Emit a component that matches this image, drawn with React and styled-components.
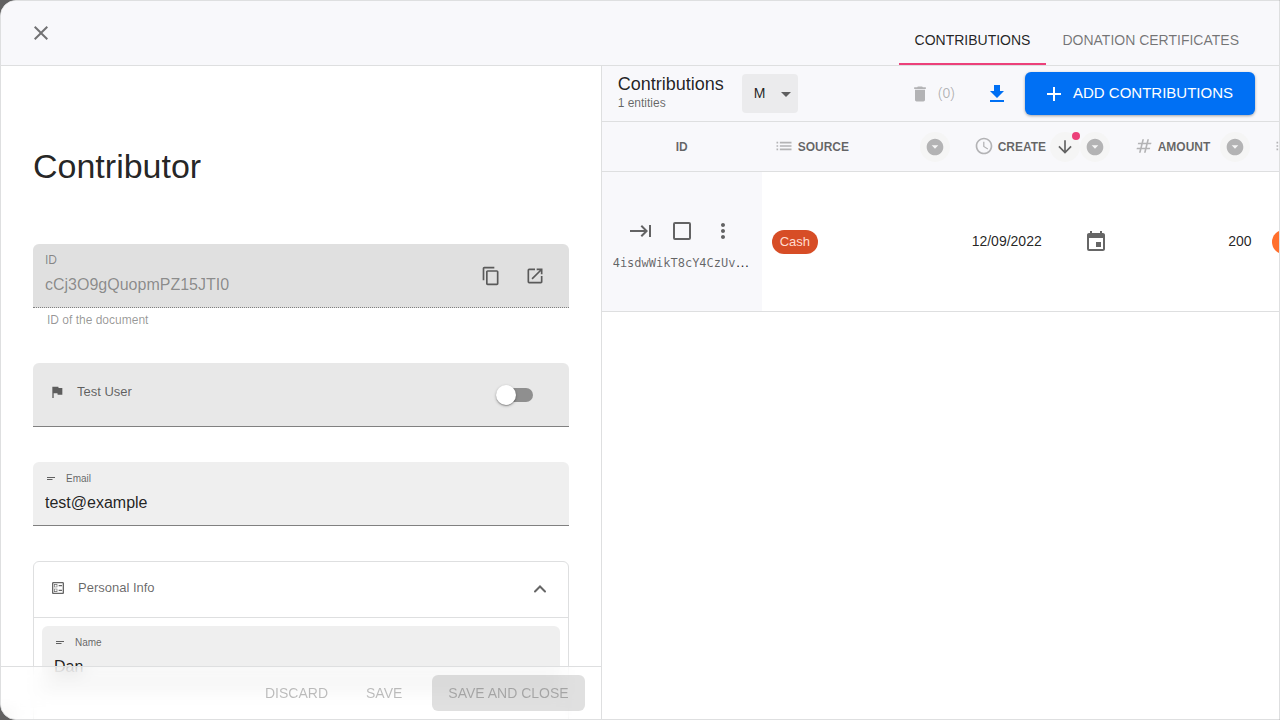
import React from "react";
import styled, { createGlobalStyle, css } from "styled-components";
import {
  MdClose, MdDelete, MdAdd, MdList, MdSchedule, MdNumbers, MdArrowDropDownCircle,
  MdArrowDownward, MdKeyboardTab, MdMoreVert, MdEvent, MdContentCopy, MdOpenInNew,
  MdFlag, MdOutlineBallot,
} from "react-icons/md";

const line = "#dedfe0";
const ink = "rgba(0, 0, 0, 0.87)";
const soft = "rgba(0, 0, 0, 0.6)";

const GlobalStyle = createGlobalStyle`
  *, *::before, *::after { box-sizing: border-box; }
  body {
    margin: 0;
    background: #616161;
    color: ${ink};
    font-family: "Liberation Sans", Arial, sans-serif;
    font-size: 14px;
    overflow: hidden;
  }
  button, input, select { font: inherit; color: inherit; margin: 0; }
  button { border: 0; padding: 0; background: none; cursor: pointer; }
  h1, h2, p { margin: 0; font-weight: 400; }
`;

const Dialog = styled.div`
  display: flex;
  flex-direction: column;
  height: 100vh;
  border: 1px solid ${line};
  border-radius: 16px 0 0 16px;
  background: #fff;
  overflow: hidden;
`;

const TopBar = styled.header`
  display: flex;
  justify-content: space-between;
  flex: none;
  height: 65px;
  padding: 0 24px;
  background: #f8f8fb;
  border-bottom: 1px solid ${line};
`;

const IconButton = styled.button`
  display: inline-flex;
  align-items: center;
  justify-content: center;
  flex: none;
  width: ${(p) => p.$size || 40}px;
  height: ${(p) => p.$size || 40}px;
  border-radius: 50%;
  color: ${(p) => p.$color || soft};
  background: ${(p) => p.$fill || "none"};
  svg { display: block; }
`;

const CloseButton = styled(IconButton)`
  align-self: center;
  width: 32px;
  color: rgba(0, 0, 0, 0.54);
`;

const Tabs = styled.nav`
  display: flex;
`;

const Tab = styled.a`
  display: flex;
  align-items: center;
  padding: 16px 16px 0;
  text-decoration: none;
  line-height: 20px;
  color: ${(p) => (p.$active ? ink : "rgba(0, 0, 0, 0.54)")};
  border-bottom: 2px solid ${(p) => (p.$active ? "#ec407a" : "transparent")};
`;

const Body = styled.div`
  display: grid;
  grid-template-columns: 47fr 53fr;
  flex: 1;
  min-height: 0;
`;

const FormPane = styled.section`
  display: grid;
  grid-template-rows: minmax(0, 1fr);
  min-width: 0;
  min-height: 0;
  border-right: 1px solid ${line};
`;

const FormScroll = styled.div`
  grid-area: 1 / 1;
  min-height: 0;
  overflow: hidden;
  padding: 80px 32px 0;
`;

const Title = styled.h1`
  font-size: 34px;
  line-height: 40px;
`;

const Fields = styled.div`
  display: flex;
  flex-direction: column;
  gap: 35px;
  margin-top: 58px;
`;

const FieldBox = styled.div`
  display: flex;
  align-items: center;
  height: 64px;
  padding: 0 12px;
  border-radius: 6px 6px 0 0;
  background: ${(p) => p.$fill || "#efefef"};
  border-bottom: 1px ${(p) => (p.$dotted ? "dotted" : "solid")} #808080;
`;

const FieldStack = styled.div`
  display: flex;
  flex-direction: column;
  flex: 1;
  gap: ${(p) => (p.$large ? 6 : 5)}px;
  min-width: 0;
  padding-bottom: ${(p) => (p.$large ? 1 : 0)}px;
`;

const FieldLabel = styled.label`
  display: flex;
  align-items: center;
  gap: 9px;
  font-size: ${(p) => (p.$large ? 12 : 10)}px;
  line-height: 14px;
  color: ${(p) => (p.$faded ? "rgba(0, 0, 0, 0.42)" : soft)};
`;

const TextInput = styled.input`
  width: 100%;
  height: 24px;
  padding: 0;
  border: 0;
  outline: 0;
  background: none;
  font-size: 16px;
  color: ${ink};
  &:disabled { color: rgba(0, 0, 0, 0.4); }
`;

const FieldActions = styled.div`
  display: flex;
  gap: 4px;
  padding-right: 2px;
`;

const Helper = styled.p`
  padding: 4px 14px 0;
  font-size: 12px;
  line-height: 16px;
  color: rgba(0, 0, 0, 0.42);
`;

const SwitchRow = styled.label`
  display: flex;
  align-items: center;
  flex: 1;
  padding: 0 24px 0 4px;
`;

const RowTitle = styled.span`
  display: flex;
  align-items: center;
  flex: 1;
  gap: 12px;
  padding-bottom: ${(p) => p.$lift}px;
  font-size: 13px;
  line-height: 16px;
  color: ${soft};
`;

const Switch = styled.input`
  appearance: none;
  display: flex;
  align-items: center;
  width: 34px;
  height: 14px;
  background: #8f8f8f;
  border-radius: 7px;
  &::before {
    content: "";
    flex: none;
    width: 20px;
    height: 20px;
    margin-left: -3px;
    border-radius: 50%;
    background: #fff;
    box-shadow: 0 1px 3px rgba(0, 0, 0, 0.3), 0 1px 1px rgba(0, 0, 0, 0.2);
  }
`;

const Group = styled.section`
  border: 1px solid ${line};
  border-radius: 6px;
`;

const GroupHeader = styled.button`
  display: flex;
  align-items: center;
  width: 100%;
  height: 56px;
  padding: 0 16px 2px;
  border-bottom: 1px solid ${line};
  text-align: left;
  color: ${soft};
`;

const GroupBody = styled.div`
  padding: 8px 8px 96px;
`;

const FormFooter = styled.footer`
  grid-area: 1 / 1;
  align-self: end;
  z-index: 1;
  display: flex;
  align-items: center;
  justify-content: flex-end;
  gap: 8px;
  height: 53px;
  padding: 0 16px;
  border-top: 1px solid ${line};
  background: rgba(255, 255, 255, 0.6);
  backdrop-filter: blur(8px);
`;

const ActionButton = styled.button`
  height: 36px;
  padding: 0 ${(p) => (p.$filled ? 16 : 15)}px;
  border-radius: 6px;
  color: rgba(0, 0, 0, 0.26);
  white-space: nowrap;
  ${(p) => p.$filled && css`
    background: rgba(0, 0, 0, 0.12);
    margin-left: 7px;
  `}
`;

const TablePane = styled.section`
  display: flex;
  flex-direction: column;
  min-width: 0;
  overflow: hidden;
`;

const Toolbar = styled.div`
  display: flex;
  align-items: center;
  justify-content: space-between;
  flex: none;
  height: 56px;
  padding: 0 24px 0 16px;
  background: #f8f8fb;
  border-bottom: 1px solid ${line};
`;

const ToolbarSide = styled.div`
  display: flex;
  align-items: center;
  gap: ${(p) => p.$gap}px;
`;

const TitleBlock = styled.div`
  padding-bottom: 2px;
`;

const TableTitle = styled.h2`
  font-size: 18px;
  line-height: 20px;
`;

const Count = styled.p`
  font-size: 12px;
  line-height: 18px;
  color: ${soft};
`;

const SelectBox = styled.div`
  display: grid;
  align-items: center;
  width: 56px;
  height: 39px;
  border-radius: 4px;
  background: #ebebed;
  select, svg { grid-area: 1 / 1; }
  svg { justify-self: end; color: ${soft}; pointer-events: none; }
`;

const SizeSelect = styled.select`
  appearance: none;
  width: 100%;
  height: 100%;
  padding: 0 12px 2px;
  border: 0;
  background: none;
`;

const ButtonText = styled.span`
  padding-bottom: 2px;
`;

const DeleteButton = styled.button`
  display: flex;
  align-items: center;
  gap: 8px;
  padding: 0 8px;
  color: rgba(0, 0, 0, 0.28);
`;

const AddButton = styled.button`
  display: flex;
  align-items: center;
  gap: 7px;
  height: 43px;
  padding: 0 22px 0 17px;
  border-radius: 6px;
  background: #0070f4;
  color: #fff;
  font-size: 15px;
  white-space: nowrap;
  box-shadow: 0 1px 3px rgba(0, 0, 0, 0.35);
`;

const Table = styled.table`
  table-layout: fixed;
  width: 840px;
  border-collapse: separate;
  border-spacing: 0;
`;

const HeadCell = styled.th`
  height: 50px;
  padding: 0 12px;
  background: #f8f8fb;
  border-bottom: 1px solid ${line};
  font-size: 12px;
  color: ${soft};
  text-align: center;
`;

const HeadContent = styled.div`
  display: flex;
  align-items: center;
`;

const HeadIcon = styled.span`
  display: flex;
  flex: none;
  padding-bottom: 2px;
  color: rgba(0, 0, 0, 0.28);
`;

const HeadLabel = styled.span`
  flex: 1;
  padding-left: 4px;
  text-align: left;
`;

const SortButton = styled(IconButton)`
  position: relative;
  &::after {
    content: "";
    position: absolute;
    top: 0;
    right: 0;
    width: 8px;
    height: 8px;
    border-radius: 50%;
    background: #ec407a;
  }
`;

const Cell = styled.td`
  height: 140px;
  padding: 0 ${(p) => (p.$frozen ? 11 : 10)}px ${(p) => p.$lift || 0}px;
  border-bottom: 1px solid ${line};
  background: ${(p) => (p.$frozen ? "#f8f8fb" : "#fff")};
  text-align: ${(p) => p.$align || "left"};
`;

const RowActions = styled.div`
  display: flex;
  align-items: center;
  justify-content: center;
  color: ${soft};
`;

const CheckWrap = styled.label`
  display: flex;
  padding: 12px;
`;

const Check = styled.input`
  appearance: none;
  width: 18px;
  height: 18px;
  border: 2px solid ${soft};
  border-radius: 2px;
`;

const RowId = styled.div`
  height: 20px;
  line-height: 20px;
  overflow: hidden;
  text-overflow: ellipsis;
  white-space: nowrap;
  font-size: 14px;
  span {
    font-family: "DejaVu Sans Mono", monospace;
    font-size: 12px;
    color: ${soft};
  }
`;

const Chip = styled.span`
  display: inline-flex;
  align-items: center;
  height: 24px;
  padding: 0 8px;
  border-radius: 12px;
  font-size: 13px;
  vertical-align: middle;
  background: ${(p) => p.$fill};
  color: ${(p) => p.$color};
`;

const DateValue = styled.div`
  display: flex;
  align-items: center;
  justify-content: space-between;
  padding-right: 4px;
  svg { color: ${soft}; }
`;

function DownloadIcon() {
  return (
    <svg width="24" height="24" viewBox="0 0 24 24" fill="currentColor" aria-hidden="true">
      <path d="M19 9h-4V3H9v6H5l7 7 7-7zM5 18v2h14v-2H5z" />
    </svg>
  );
}

function CaretIcon() {
  return (
    <svg width="24" height="24" viewBox="0 0 24 24" fill="currentColor" aria-hidden="true">
      <path d="m7 10 5 5 5-5z" />
    </svg>
  );
}

function ShortTextIcon() {
  return (
    <svg width="12" height="12" viewBox="0 0 12 12" fill="currentColor" aria-hidden="true">
      <path d="M2 4h8v1H2zM2 6h5.5v1H2z" />
    </svg>
  );
}

function ChevronUpIcon() {
  return (
    <svg width="24" height="24" viewBox="0 0 24 24" fill="none" stroke="currentColor" strokeWidth="2" strokeLinecap="round" aria-hidden="true">
      <path d="m7 14.5 5-5 5 5" />
    </svg>
  );
}

function TextField({ id, label, value }) {
  return (
    <FieldBox>
      <FieldStack>
        <FieldLabel htmlFor={id}>
          <ShortTextIcon />
          {label}
        </FieldLabel>
        <TextInput id={id} defaultValue={value} />
      </FieldStack>
    </FieldBox>
  );
}

function FilterButton({ name }) {
  return (
    <IconButton $size={30} $fill="#f5f5f5" $color="#b3b3b4" aria-label={`Filter ${name}`}>
      <MdArrowDropDownCircle size={20} />
    </IconButton>
  );
}

function Column({ icon, name, sorted }) {
  return (
    <HeadCell scope="col">
      <HeadContent>
        <HeadIcon>{icon}</HeadIcon>
        <HeadLabel>{name}</HeadLabel>
        {sorted && (
          <SortButton $size={30} $fill="#f5f5f5" aria-label={`Sort by ${name}`}>
            <MdArrowDownward size={20} />
          </SortButton>
        )}
        <FilterButton name={name} />
      </HeadContent>
    </HeadCell>
  );
}

export default function App() {
  return (
    <>
      <GlobalStyle />
      <Dialog>
        <TopBar>
          <CloseButton aria-label="Close"><MdClose size={24} /></CloseButton>
          <Tabs>
            <Tab href="#contributions" $active>CONTRIBUTIONS</Tab>
            <Tab href="#certificates">DONATION CERTIFICATES</Tab>
          </Tabs>
        </TopBar>
        <Body>
          <FormPane>
            <FormScroll>
              <Title>Contributor</Title>
              <Fields>
                <div>
                  <FieldBox $fill="#e0e0e0" $dotted>
                    <FieldStack $large>
                      <FieldLabel htmlFor="doc-id" $large $faded>ID</FieldLabel>
                      <TextInput id="doc-id" defaultValue="cCj3O9gQuopmPZ15JTI0" disabled />
                    </FieldStack>
                    <FieldActions>
                      <IconButton aria-label="Copy"><MdContentCopy size={20} /></IconButton>
                      <IconButton aria-label="Open"><MdOpenInNew size={20} /></IconButton>
                    </FieldActions>
                  </FieldBox>
                  <Helper>ID of the document</Helper>
                </div>
                <FieldBox $fill="#e8e8e8">
                  <SwitchRow>
                    <RowTitle $lift={6}><MdFlag size={16} />Test User</RowTitle>
                    <Switch type="checkbox" role="switch" />
                  </SwitchRow>
                </FieldBox>
                <TextField id="email" label="Email" value="test@example" />
                <Group>
                  <GroupHeader aria-expanded="true">
                    <RowTitle $lift={2}><MdOutlineBallot size={16} />Personal Info</RowTitle>
                    <ChevronUpIcon />
                  </GroupHeader>
                  <GroupBody>
                    <TextField id="name" label="Name" value="Dan" />
                  </GroupBody>
                </Group>
              </Fields>
            </FormScroll>
            <FormFooter>
              <ActionButton disabled>DISCARD</ActionButton>
              <ActionButton disabled>SAVE</ActionButton>
              <ActionButton disabled $filled>SAVE AND CLOSE</ActionButton>
            </FormFooter>
          </FormPane>
          <TablePane>
            <Toolbar>
              <ToolbarSide $gap={18}>
                <TitleBlock>
                  <TableTitle>Contributions</TableTitle>
                  <Count>1 entities</Count>
                </TitleBlock>
                <SelectBox>
                  <SizeSelect aria-label="Row size" defaultValue="m">
                    <option value="m">M</option>
                  </SizeSelect>
                  <CaretIcon />
                </SelectBox>
              </ToolbarSide>
              <ToolbarSide $gap={14}>
                <DeleteButton disabled><MdDelete size={20} /><ButtonText>(0)</ButtonText></DeleteButton>
                <ToolbarSide $gap={8}>
                  <IconButton $color="#0070f4" aria-label="Download"><DownloadIcon /></IconButton>
                  <AddButton><MdAdd size={24} /><ButtonText>ADD CONTRIBUTIONS</ButtonText></AddButton>
                </ToolbarSide>
              </ToolbarSide>
            </Toolbar>
            <Table>
              <colgroup>
                <col style={{ width: 160 }} />
                <col style={{ width: 200 }} />
                <col style={{ width: 160 }} />
                <col style={{ width: 140 }} />
                <col style={{ width: 180 }} />
              </colgroup>
              <thead>
                <tr>
                  <HeadCell scope="col">ID</HeadCell>
                  <Column icon={<MdList size={20} />} name="SOURCE" />
                  <Column icon={<MdSchedule size={20} />} name="CREATE" sorted />
                  <Column icon={<MdNumbers size={20} />} name="AMOUNT" />
                  <Column icon={<MdList size={20} />} name="" />
                </tr>
              </thead>
              <tbody>
                <tr>
                  <Cell $frozen $lift={2}>
                    <RowActions>
                      <IconButton aria-label="Open entry"><MdKeyboardTab size={24} /></IconButton>
                      <CheckWrap><Check type="checkbox" aria-label="Select entry" /></CheckWrap>
                      <IconButton aria-label="More"><MdMoreVert size={24} /></IconButton>
                    </RowActions>
                    <RowId><span>4isdwWikT8cY4CzUvGqLm</span></RowId>
                  </Cell>
                  <Cell><Chip $fill="#d74d26" $color="#ffdcd0">Cash</Chip></Cell>
                  <Cell>
                    <DateValue><ButtonText>12/09/2022</ButtonText><MdEvent size={24} /></DateValue>
                  </Cell>
                  <Cell $align="right" $lift={2}>200</Cell>
                  <Cell><Chip $fill="#ff6f2c" $color="#ffffff">Online</Chip></Cell>
                </tr>
              </tbody>
            </Table>
          </TablePane>
        </Body>
      </Dialog>
    </>
  );
}
